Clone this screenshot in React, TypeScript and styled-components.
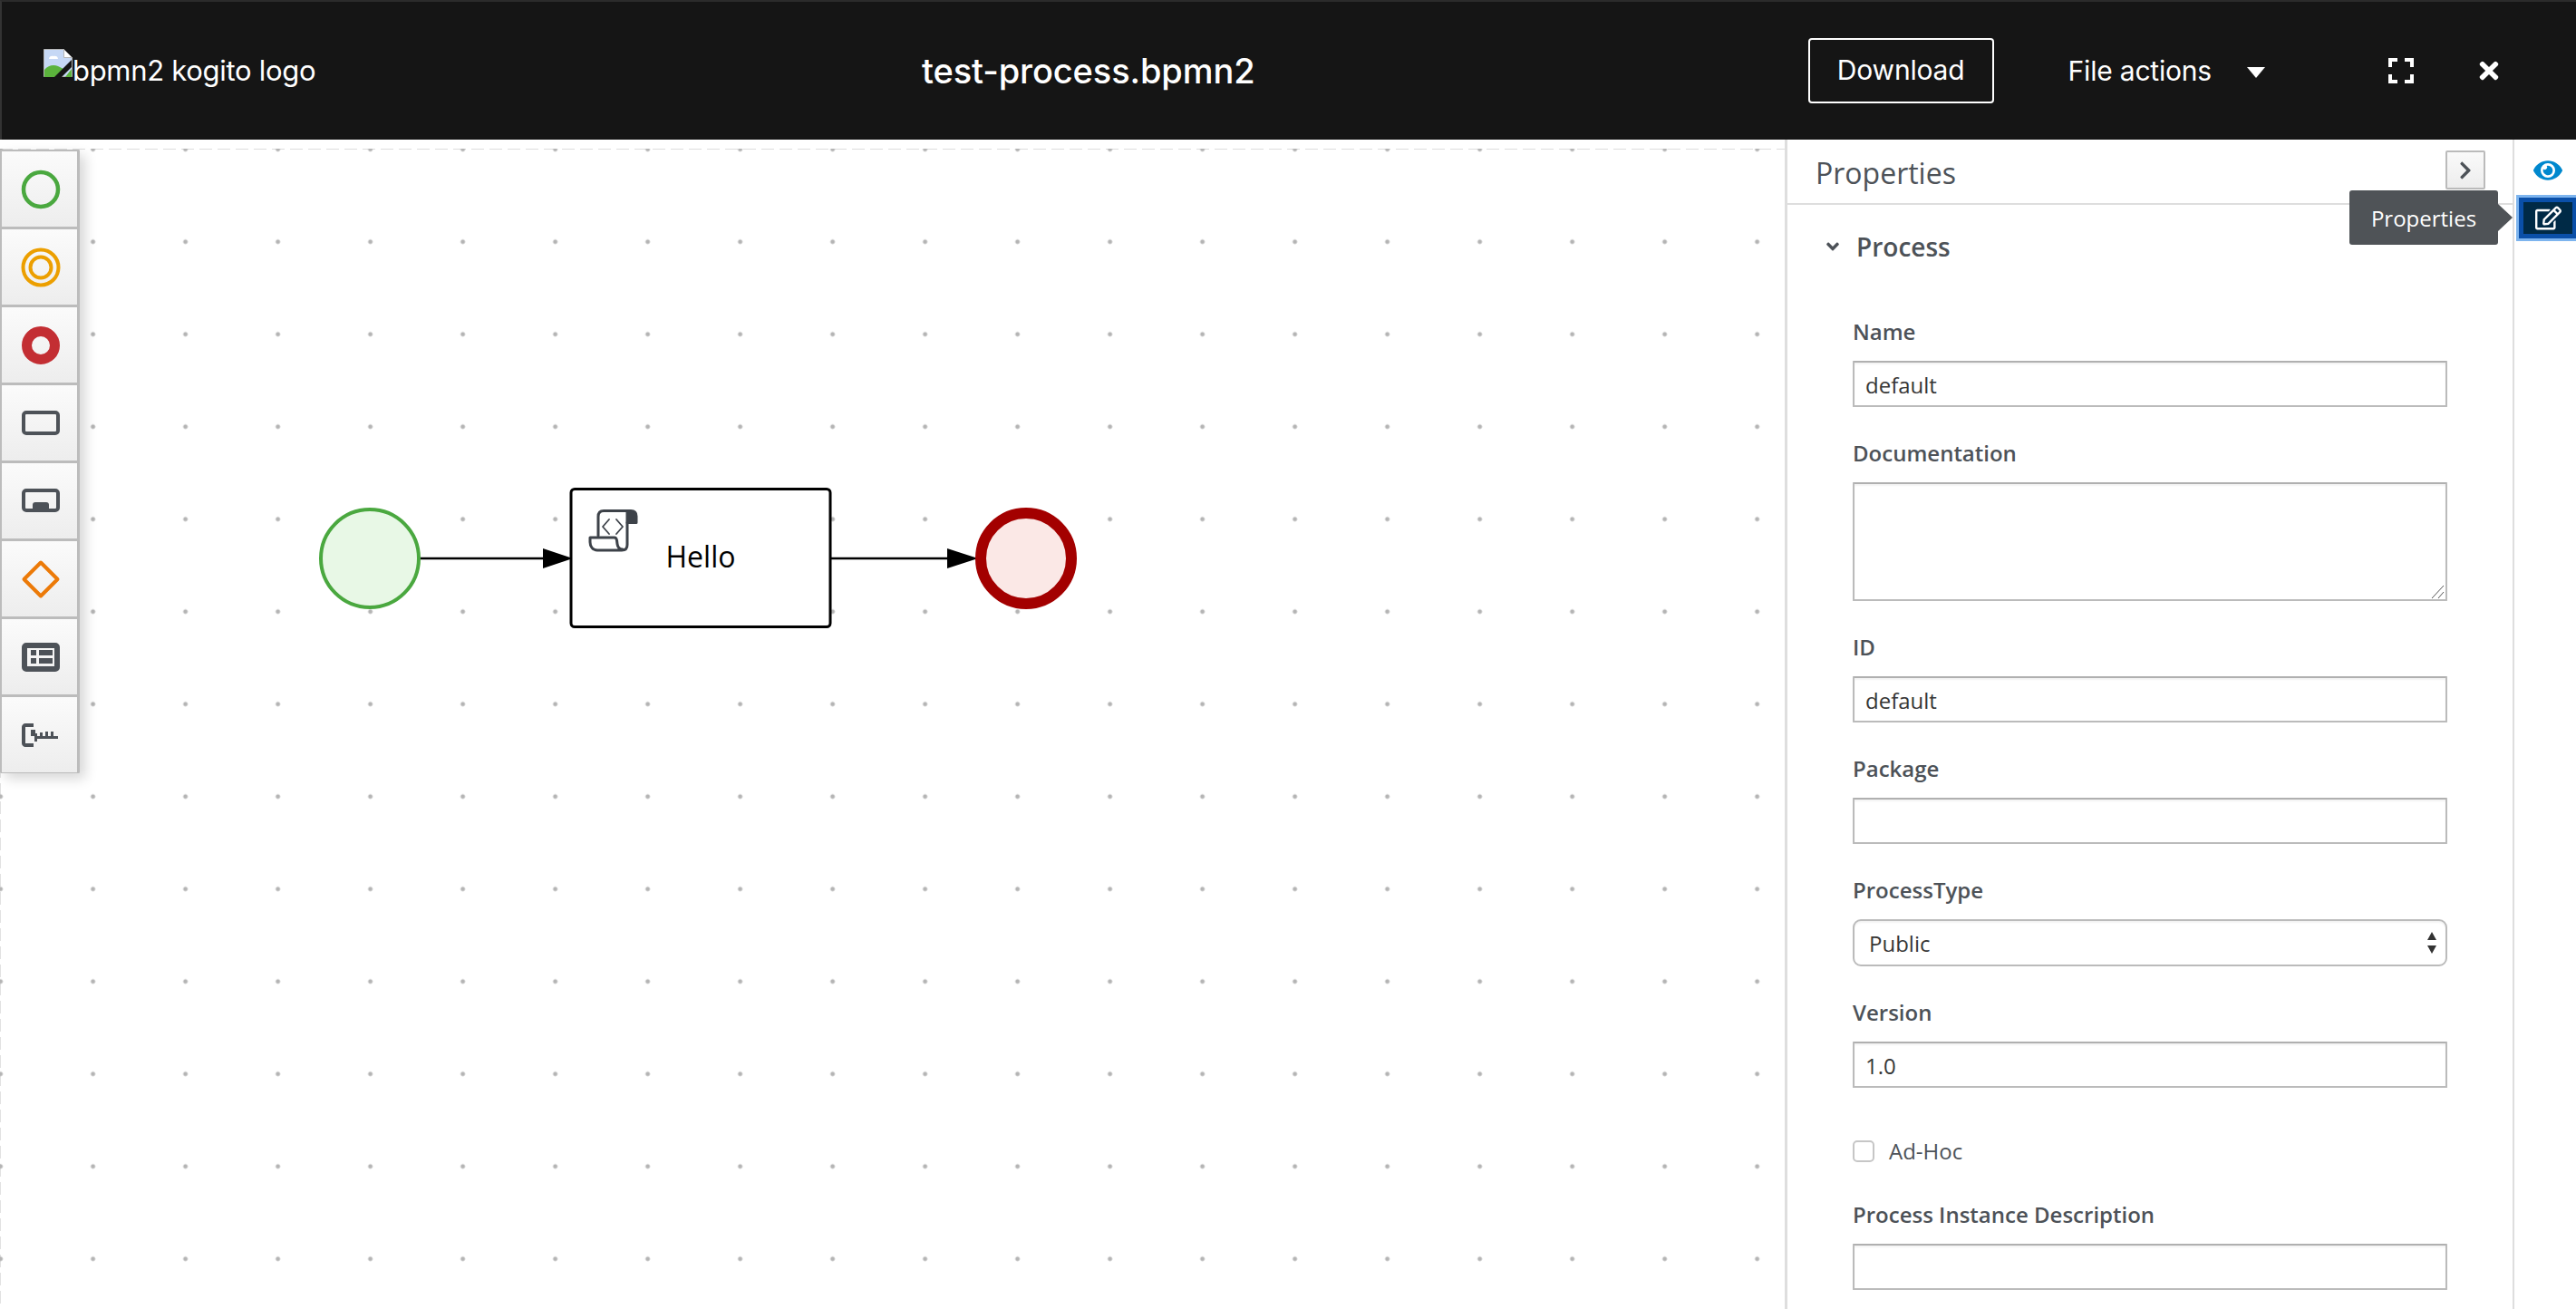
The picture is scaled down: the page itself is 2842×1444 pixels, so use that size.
import React from "react";
import styled, { createGlobalStyle } from "styled-components";
import { FaAngleDown, FaChevronRight, FaEye, FaRegEdit, FaTimes } from "react-icons/fa";

const GlobalStyle = createGlobalStyle`
  html, body {
    margin: 0;
    height: 100%;
    overflow: hidden;
    background: #fff;
  }
  * {
    box-sizing: border-box;
  }
`;

const Page = styled.div`
  display: flex;
  flex-direction: column;
  width: 2842px;
  height: 1444px;
  overflow: hidden;
`;

const Header = styled.header`
  display: flex;
  align-items: center;
  flex: 0 0 154px;
  background: #151515;
  border-top: 2px solid #2b2b2b;
  border-left: 2px solid #333;
  color: #fff;
  font-family: Inter, sans-serif;
`;

const Brand = styled.div`
  display: flex;
  align-items: center;
  flex: 0 0 1015px;
  padding: 0 0 2px 46px;
  font-size: 31px;
  line-height: 1;
  letter-spacing: -0.3px;
`;

const BrokenImageIcon = styled.svg`
  flex: none;
  width: 32px;
  height: 32px;
  margin-bottom: 14px;
`;

const Title = styled.h1`
  margin: 0;
  font-size: 38px;
  font-weight: 500;
  letter-spacing: -0.1px;
`;

const Actions = styled.div`
  display: flex;
  align-items: center;
  margin-left: auto;
  padding-right: 84px;
`;

const DownloadButton = styled.button`
  width: 205px;
  height: 72px;
  margin-right: 82px;
  padding: 0 0 3px;
  border: 2px solid #fff;
  border-radius: 4px;
  background: transparent;
  color: #fff;
  font: 30px Inter, sans-serif;
  letter-spacing: -0.2px;
`;

const FileActions = styled.div`
  display: flex;
  align-items: center;
  gap: 39px;
  margin-right: 136px;
  padding-bottom: 1px;
  font-size: 30px;
  letter-spacing: -0.2px;
`;

const Caret = styled.span`
  width: 0;
  height: 0;
  margin-top: 4px;
  border-top: 12px solid #fff;
  border-left: 10px solid transparent;
  border-right: 10px solid transparent;
`;

const ExpandIcon = styled.svg`
  width: 28px;
  height: 28px;
  margin-right: 71px;
`;

const CloseIcon = styled(FaTimes)`
  width: 24px;
  height: 30px;
`;

const Main = styled.main`
  position: relative;
  display: flex;
  flex: 1;
  min-height: 0;
`;

const Canvas = styled.section`
  position: relative;
  flex: 0 0 1969px;
  padding-top: 10px;
`;

const DotSurface = styled.div`
  height: 100%;
  background-image:
    radial-gradient(circle at 4px 4px, #b4b4b4 2px, transparent 2.9px),
    repeating-linear-gradient(90deg, #ddd 0 14px, transparent 14px 20px),
    repeating-linear-gradient(180deg, #e2e2e2 0 14px, transparent 14px 20px);
  background-size: 102px 102px, 100% 1px, 1px 100%;
  background-position: -3.4px -3.3px, 0 0, 0 0;
  background-repeat: repeat, no-repeat, no-repeat;
`;

const Diagram = styled.svg`
  position: absolute;
  top: 0;
  left: 0;
  width: 1969px;
  height: 1290px;
`;

const HelloLabel = styled.text`
  font-family: "Open Sans", sans-serif;
  font-size: 32px;
  fill: #000;
`;

const Palette = styled.nav`
  position: absolute;
  top: 11px;
  left: 0;
  width: 88px;
  background: #bbb;
  box-shadow: 6px 6px 14px rgba(0, 0, 0, 0.16);
  border-radius: 2px;
  overflow: hidden;
`;

const PaletteItem = styled.div`
  display: flex;
  align-items: center;
  justify-content: center;
  height: 86px;
  padding-left: 3px;
  border: solid #bcbcbc;
  border-width: 2px 3px 1px 2px;
  background: linear-gradient(180deg, #fbfbfb 0%, #ededed 100%);
`;

const PaletteIcon = styled.svg`
  width: 46px;
  height: 46px;
  overflow: visible;
`;

const Panel = styled.aside`
  flex: 1;
  min-width: 0;
  border-left: 3px solid #dedede;
  overflow: hidden;
  font-family: "Open Sans", sans-serif;
`;

const PanelHeader = styled.div`
  display: flex;
  justify-content: space-between;
  height: 72px;
  padding: 12px 30px 0 31px;
  border-bottom: 2px solid #dedede;
`;

const PanelTitle = styled.h2`
  margin: 0;
  color: #4d5258;
  font-size: 32px;
  font-weight: 400;
  line-height: 49px;
`;

const CollapseButton = styled.button`
  display: flex;
  align-items: center;
  justify-content: center;
  width: 44px;
  height: 43px;
  padding: 0;
  border: 2px solid #bbb;
  border-radius: 2px;
  background: linear-gradient(180deg, #fafafa 0%, #ededed 100%);
  color: #4d5258;
  font-size: 22px;
`;

const SectionTitle = styled.div`
  display: flex;
  align-items: center;
  height: 92px;
  padding-left: 40px;
  color: #4d5258;
  font-size: 28px;
  font-weight: 600;

  svg {
    width: 20px;
    height: 22px;
    margin-right: 16px;
  }
`;

const Form = styled.form`
  display: grid;
  gap: 38px;
  width: 727px;
  padding: 35px 0 0 72px;
`;

const Field = styled.div`
  display: grid;
  gap: 15px;
`;

const Label = styled.label`
  padding-bottom: 4px;
  color: #4d5258;
  font-size: 24px;
  font-weight: 600;
  line-height: 26px;
`;

const TextInput = styled.input`
  width: 656px;
  height: 51px;
  padding: 2px 12px 0;
  border: 2px solid #bbb;
  border-top-color: #b0b0b0;
  border-radius: 1px;
  outline: none;
  background: #fff;
  box-shadow: inset 0 2px 2px rgba(3, 3, 3, 0.05);
  color: #363636;
  font: 24px "Open Sans", sans-serif;
`;

const TextAreaWrap = styled.div`
  position: relative;
  width: 656px;
  height: 131px;
`;

const TextArea = styled.textarea`
  display: block;
  width: 100%;
  height: 100%;
  padding: 8px 12px;
  border: 2px solid #bbb;
  border-top-color: #b0b0b0;
  border-radius: 1px;
  outline: none;
  background: #fff;
  box-shadow: inset 0 2px 2px rgba(3, 3, 3, 0.05);
  resize: none;
`;

const ResizeGrip = styled.svg`
  position: absolute;
  right: 3px;
  bottom: 3px;
  width: 15px;
  height: 14px;
`;

const SelectBox = styled.div`
  display: flex;
  align-items: center;
  justify-content: space-between;
  width: 656px;
  height: 52px;
  padding: 0 9px 0 16px;
  border: 2px solid #bbb;
  border-radius: 9px;
  box-shadow: inset 0 2px 2px rgba(3, 3, 3, 0.05);
  color: #363636;
  font-size: 24px;
`;

const SelectArrows = styled.svg`
  width: 12px;
  height: 24px;
  fill: #333;
`;

const CheckRow = styled.div`
  display: flex;
  align-items: center;
  gap: 16px;
  padding: 20px 0 7px;
  color: #4d5258;
  font-size: 24px;
  line-height: 24px;
`;

const CheckBox = styled.input`
  appearance: none;
  width: 24px;
  height: 24px;
  margin: 0;
  border: 2px solid #c6c6c6;
  border-radius: 5px;
  background: #fff;
`;

const Rail = styled.div`
  display: flex;
  flex-direction: column;
  align-items: flex-start;
  flex: 0 0 70px;
  min-width: 0;
  padding-top: 13px;
  border-left: 2px solid #dedede;
`;

const RailButton = styled.div<{ $active?: boolean }>`
  display: flex;
  flex: none;
  align-items: center;
  justify-content: center;
  width: ${(p) => (p.$active ? "64px" : "74px")};
  height: ${(p) => (p.$active ? "45px" : "42px")};
  margin-top: ${(p) => (p.$active ? "9px" : "0")};
  margin-left: ${(p) => (p.$active ? "5px" : "0")};
  border: ${(p) => (p.$active ? "5px solid #0a4fa8" : "0")};
  background: ${(p) => (p.$active ? "#002a46" : "transparent")};
  box-shadow: ${(p) => (p.$active ? "0 0 0 3px #7db4ee" : "none")};
  color: ${(p) => (p.$active ? "#fff" : "#0088ce")};
  font-size: ${(p) => (p.$active ? "29px" : "32px")};
`;

const Tooltip = styled.div`
  position: absolute;
  top: 56px;
  left: 2592px;
  display: flex;
  align-items: center;
  justify-content: center;
  width: 164px;
  height: 60px;
  border-radius: 3px;
  background: #4f5357;
  color: #fff;
  font: 24px "Open Sans", sans-serif;

  &::after {
    content: "";
    position: absolute;
    left: 100%;
    top: 15px;
    border-top: 15px solid transparent;
    border-bottom: 15px solid transparent;
    border-left: 16px solid #4f5357;
  }
`;

const BrokenImage = () => (
  <BrokenImageIcon viewBox="0 0 32 32" aria-hidden="true">
    <path d="M.5.5h22l9 9v21H.5z" fill="#c6d8f5" stroke="#b5b5b5" />
    <path d="M22.5.5v9h9z" fill="#fff" stroke="#b5b5b5" />
    <path d="M6 11c0-3 3-4 5-3 2-1 5 0 5 3z" fill="#fff" />
    <path d="M1 31v-8c4-5 10-6 15-4l6 3-8 9z" fill="#5bb33c" />
    <path d="M31 12L12 31h8l11-11z" fill="#151515" />
    <path d="M31 22l-7 9h7z" fill="#5bb33c" />
  </BrokenImageIcon>
);

const ScriptTaskIcon = () => (
  <g fill="none" stroke="#3d4249" strokeLinecap="round" strokeLinejoin="round">
    <path d="M660 591v-21c0-4.500 2.500-6.500 6-6.500h30c4 0 6 2.500 6 6v7h-10" strokeWidth="3" />
    <path d="M692 565v36c0 4-2.500 6-6 6h-27c-5 0-8-4-8-9v-5h27c1.500 0 2 1 2.500 3l.5 4c.500 4 3 6 6 6" strokeWidth="3" />
    <path d="M692 565h10v11h-10z" fill="#3d4249" stroke="none" />
    <path d="M672 573l-7 8 7 8M680 573l7 8-7 8" strokeWidth="1.800" />
  </g>
);

const fields = [
  { label: "Name", value: "default" },
  { label: "ID", value: "default" },
  { label: "Package", value: "" },
];

const paletteIcons: React.ReactNode[] = [
  <circle key="start" cx="23" cy="23" r="19" fill="none" stroke="#4aa83f" strokeWidth="4.500" />,
  <g key="intermediate" fill="none" stroke="#ec9f00" strokeWidth="4">
    <circle cx="23" cy="23" r="19.500" />
    <circle cx="23" cy="23" r="11.500" />
  </g>,
  <circle key="end" cx="23" cy="23" r="15.500" fill="none" stroke="#c32e33" strokeWidth="11" />,
  <rect key="task" x="4" y="11" width="38" height="23" rx="3" fill="none" stroke="#4d5258" strokeWidth="4" />,
  <g key="subprocess">
    <rect x="4" y="11" width="38" height="22" rx="3" fill="none" stroke="#4d5258" strokeWidth="4" />
    <path d="M14 35v-8c0-2 1-3 3-3h12c2 0 3 1 3 3v8z" fill="#4d5258" />
  </g>,
  <path key="gateway" d="M23 4.500L41.500 23 23 41.500 4.500 23z" fill="none" stroke="#ec7a08" strokeWidth="4" strokeLinejoin="round" />,
  <g key="lane" fill="#4d5258">
    <rect x="5" y="10" width="36" height="26" rx="2" fill="none" stroke="#4d5258" strokeWidth="6" />
    <rect x="12" y="15" width="6" height="6" />
    <rect x="21" y="15" width="15" height="6" />
    <rect x="12" y="24" width="6" height="6" />
    <rect x="21" y="24" width="15" height="6" />
  </g>,
  <g key="annotation" fill="#4d5258">
    <path d="M15 12H6c-1 0-2 1-2 2v18c0 1 1 2 2 2h9" fill="none" stroke="#4d5258" strokeWidth="4" />
    <path d="M12 17h5v4h2v3h3v-4h3v4h3v-5h3v5h3v-5h3v5h5v3H19v3h-3v-6h-4z" />
  </g>,
];

const App = () => (
  <Page>
    <GlobalStyle />
    <Header>
      <Brand>
        <BrokenImage />
        bpmn2 kogito logo
      </Brand>
      <Title>test-process.bpmn2</Title>
      <Actions>
        <DownloadButton>Download</DownloadButton>
        <FileActions>
          File actions
          <Caret />
        </FileActions>
        <ExpandIcon viewBox="0 0 28 28" fill="none" stroke="#fff" strokeWidth="4">
          <path d="M2 10V2h8M18 2h8v8M26 18v8h-8M10 26H2v-8" />
        </ExpandIcon>
        <CloseIcon />
      </Actions>
    </Header>
    <Main>
      <Canvas>
        <DotSurface />
        <Diagram viewBox="0 154 1969 1290">
          <circle cx="408" cy="616" r="54" fill="#e8f8e6" stroke="#4aa83f" strokeWidth="4" />
          <path d="M464 616H605" stroke="#000" strokeWidth="2.500" />
          <path d="M599 605l33 11-33 11z" fill="#000" />
          <rect x="630" y="539.500" width="286" height="152" rx="4" fill="#fff" stroke="#000" strokeWidth="3" />
          <ScriptTaskIcon />
          <HelloLabel x="773" y="613" textAnchor="middle" dominantBaseline="central">Hello</HelloLabel>
          <path d="M917 616H1050" stroke="#000" strokeWidth="2.500" />
          <path d="M1045 605l34 11-34 11z" fill="#000" />
          <circle cx="1132" cy="616" r="50" fill="#fbe8e6" stroke="#a30000" strokeWidth="12" />
        </Diagram>
        <Palette>
          {paletteIcons.map((icon, i) => (
            <PaletteItem key={i}>
              <PaletteIcon viewBox="0 0 46 46">{icon}</PaletteIcon>
            </PaletteItem>
          ))}
        </Palette>
      </Canvas>
      <Panel>
        <PanelHeader>
          <PanelTitle>Properties</PanelTitle>
          <CollapseButton><FaChevronRight /></CollapseButton>
        </PanelHeader>
        <SectionTitle>
          <FaAngleDown />
          Process
        </SectionTitle>
        <Form>
          <Field>
            <Label>{fields[0].label}</Label>
            <TextInput readOnly value={fields[0].value} />
          </Field>
          <Field>
            <Label>Documentation</Label>
            <TextAreaWrap>
              <TextArea readOnly />
              <ResizeGrip viewBox="0 0 15 14" fill="none" stroke="#555" strokeWidth="1">
                <path d="M1 14L14 0M8 14L14 7" />
              </ResizeGrip>
            </TextAreaWrap>
          </Field>
          {fields.slice(1).map((f) => (
            <Field key={f.label}>
              <Label>{f.label}</Label>
              <TextInput readOnly value={f.value} />
            </Field>
          ))}
          <Field>
            <Label>ProcessType</Label>
            <SelectBox>
              Public
              <SelectArrows viewBox="0 0 12 24">
                <path d="M6 0l5 9H1zM6 24l-5-9h10z" />
              </SelectArrows>
            </SelectBox>
          </Field>
          <Field>
            <Label>Version</Label>
            <TextInput readOnly value="1.0" />
          </Field>
          <CheckRow>
            <CheckBox type="checkbox" readOnly />
            Ad-Hoc
          </CheckRow>
          <Field>
            <Label>Process Instance Description</Label>
            <TextInput readOnly value="" />
          </Field>
        </Form>
      </Panel>
      <Rail>
        <RailButton><FaEye /></RailButton>
        <RailButton $active><FaRegEdit /></RailButton>
      </Rail>
      <Tooltip>Properties</Tooltip>
    </Main>
  </Page>
);

export default App;
